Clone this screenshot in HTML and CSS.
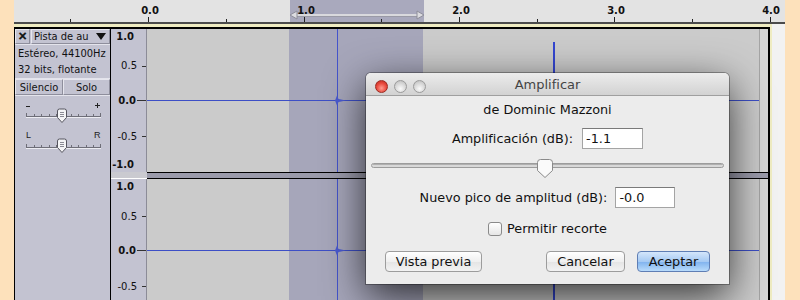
FILE: index.html
```html
<!DOCTYPE html>
<html lang="es">
<head>
  <meta charset="UTF-8" />
  <title>Amplificar</title>
  <link rel="stylesheet" href="styles.css">
</head>
<body>
  <div class="edge"></div>

  <div class="project">
    <div class="ruler">
      <svg width="771" height="22">
        <rect x="276" y="0" width="134" height="22" fill="#a9a9bd"/>
        <line x1="282" y1="15" x2="403" y2="15" stroke="#d9d9dd" stroke-width="2"/>
        <line x1="282" y1="16.5" x2="403" y2="16.5" stroke="#9a9aa6" stroke-width="1"/>
        <polygon points="276,15 283,11 283,19" fill="#dcdce0" stroke="#8e8e9a" stroke-width="1"/>
        <polygon points="410,15 403,11 403,19" fill="#dcdce0" stroke="#8e8e9a" stroke-width="1"/>
        <g stroke="#222" stroke-width="1">
          <line x1="56.5" y1="19" x2="56.5" y2="22"/>
          <line x1="134.5" y1="17" x2="134.5" y2="22"/>
          <line x1="212.5" y1="19" x2="212.5" y2="22"/>
          <line x1="290.5" y1="17" x2="290.5" y2="22"/>
          <line x1="367.5" y1="19" x2="367.5" y2="22"/>
          <line x1="445.5" y1="17" x2="445.5" y2="22"/>
          <line x1="523.5" y1="19" x2="523.5" y2="22"/>
          <line x1="600.5" y1="17" x2="600.5" y2="22"/>
          <line x1="678.5" y1="19" x2="678.5" y2="22"/>
          <line x1="756.5" y1="17" x2="756.5" y2="22"/>
        </g>
        <g class="ruler-label">
          <text x="136" y="14">0.0</text>
          <text x="292" y="14">1.0</text>
          <text x="447" y="14">2.0</text>
          <text x="602" y="14">3.0</text>
          <text x="757" y="14">4.0</text>
        </g>
      </svg>
    </div>

    <div class="workspace">
      <div class="focus">
        <div class="track">
          <div class="panel">
            <div class="panel-top">
              <span class="bevel close">&#x2715;</span>
              <span class="bevel name">Pista de au<i class="arrow"></i></span>
            </div>
            <div class="info">
              Estéreo, 44100Hz<br />
              32 bits, flotante
            </div>
            <div class="mute-row">
              <span class="bevel mute">Silencio</span>
              <span class="bevel solo">Solo</span>
            </div>
            <svg class="sliders" width="95" height="62">
              <line x1="11" y1="10.5" x2="15" y2="10.5" stroke="#222"/>
              <line x1="80" y1="9.5" x2="85" y2="9.5" stroke="#222"/>
              <line x1="82.5" y1="7" x2="82.5" y2="12" stroke="#222"/>
              <line x1="11" y1="20.5" x2="86" y2="20.5" stroke="#6e6e78"/>
              <line x1="11" y1="21.5" x2="86" y2="21.5" stroke="#ececf2"/>
              <g stroke="#6e6e78">
                <line x1="11.5" y1="17" x2="11.5" y2="20"/><line x1="19.5" y1="18" x2="19.5" y2="20"/>
                <line x1="26.5" y1="18" x2="26.5" y2="20"/><line x1="34.5" y1="18" x2="34.5" y2="20"/>
                <line x1="41.5" y1="18" x2="41.5" y2="20"/><line x1="56.5" y1="18" x2="56.5" y2="20"/>
                <line x1="63.5" y1="18" x2="63.5" y2="20"/><line x1="71.5" y1="18" x2="71.5" y2="20"/>
                <line x1="78.5" y1="18" x2="78.5" y2="20"/><line x1="85.5" y1="17" x2="85.5" y2="20"/>
              </g>
              <path d="M42.5 15 a2 2 0 0 1 2 -2 h5 a2 2 0 0 1 2 2 v6.5 l-4.5 5 l-4.5 -5 z" fill="#f4f4f6" stroke="#55555f"/>
              <g stroke="#8a8a94"><line x1="45" y1="16.5" x2="49" y2="16.5"/><line x1="45" y1="18.5" x2="49" y2="18.5"/><line x1="45" y1="20.5" x2="49" y2="20.5"/></g>

              <text class="pan-label" x="11" y="42">L</text>
              <text class="pan-label" x="79" y="42">R</text>
              <line x1="11" y1="51.5" x2="86" y2="51.5" stroke="#6e6e78"/>
              <line x1="11" y1="52.5" x2="86" y2="52.5" stroke="#ececf2"/>
              <g stroke="#6e6e78">
                <line x1="11.5" y1="48" x2="11.5" y2="51"/><line x1="19.5" y1="49" x2="19.5" y2="51"/>
                <line x1="26.5" y1="49" x2="26.5" y2="51"/><line x1="34.5" y1="49" x2="34.5" y2="51"/>
                <line x1="41.5" y1="49" x2="41.5" y2="51"/><line x1="56.5" y1="49" x2="56.5" y2="51"/>
                <line x1="63.5" y1="49" x2="63.5" y2="51"/><line x1="71.5" y1="49" x2="71.5" y2="51"/>
                <line x1="78.5" y1="49" x2="78.5" y2="51"/><line x1="85.5" y1="48" x2="85.5" y2="51"/>
              </g>
              <path d="M42.5 45 a2 2 0 0 1 2 -2 h5 a2 2 0 0 1 2 2 v6.5 l-4.5 5 l-4.5 -5 z" fill="#f4f4f6" stroke="#55555f"/>
              <g stroke="#8a8a94"><line x1="45" y1="46.5" x2="49" y2="46.5"/><line x1="45" y1="48.5" x2="49" y2="48.5"/><line x1="45" y1="50.5" x2="49" y2="50.5"/></g>
            </svg>
          </div>

          <div class="channels">
            <div class="channel">
              <div class="vruler">
                <svg width="35" height="143">
                  <text class="major" x="23" y="11">1.0</text>
                  <text x="26" y="40">0.5</text>
                  <text class="major" x="25" y="75">0.0</text>
                  <text x="26" y="111">-0.5</text>
                  <text class="major" x="23" y="139">-1.0</text>
                  <g stroke="#333"><line x1="31" y1="37.5" x2="35" y2="37.5"/><line x1="26" y1="71.5" x2="35" y2="71.5"/><line x1="31" y1="107.5" x2="35" y2="107.5"/></g>
                </svg>
              </div>
              <div class="wave">
                <svg width="612" height="143">
                  <rect x="142" y="0" width="134" height="143" fill="#a6a6ba"/>
                  <line x1="0" y1="71.5" x2="612" y2="71.5" stroke="#3d4fc6"/>
                  <line x1="190.5" y1="0" x2="190.5" y2="143" stroke="#4454cc"/>
                  <polygon points="188,71.5 190,66.5 191.5,70 199,71.5 191.5,73 190,76.5" fill="#4a5ad0"/>
                  <rect x="406" y="13" width="2" height="117" fill="#3446d0"/>
                </svg>
              </div>
              <div class="wave-end"></div>
            </div>

            <div class="divider">
              <div class="divider-ruler"></div>
              <div class="divider-wave"></div>
            </div>

            <div class="channel">
              <div class="vruler">
                <svg width="35" height="121">
                  <text class="major" x="23" y="11">1.0</text>
                  <text x="26" y="41">0.5</text>
                  <text class="major" x="25" y="75">0.0</text>
                  <text x="26" y="111">-0.5</text>
                  <g stroke="#333"><line x1="31" y1="37.5" x2="35" y2="37.5"/><line x1="26" y1="71.5" x2="35" y2="71.5"/><line x1="31" y1="107.5" x2="35" y2="107.5"/></g>
                </svg>
              </div>
              <div class="wave">
                <svg width="612" height="143">
                  <rect x="142" y="0" width="134" height="143" fill="#a6a6ba"/>
                  <line x1="0" y1="71.5" x2="612" y2="71.5" stroke="#3d4fc6"/>
                  <line x1="190.5" y1="0" x2="190.5" y2="143" stroke="#4454cc"/>
                  <polygon points="188,71.5 190,66.5 191.5,70 199,71.5 191.5,73 190,76.5" fill="#4a5ad0"/>
                  <rect x="406" y="13" width="2" height="117" fill="#3446d0"/>
                </svg>
              </div>
              <div class="wave-end"></div>
            </div>
          </div>
        </div>
      </div>
    </div>
  </div>

  <div class="dialog">
    <div class="titlebar">
      <div class="lights">
        <span class="light red"></span>
        <span class="light"></span>
        <span class="light"></span>
      </div>
      <div class="title">Amplificar</div>
      <div></div>
    </div>
    <div class="dialog-body">
      <div class="author">de Dominic Mazzoni</div>
      <div class="field-row">
        <label for="amp">Amplificación (dB):</label>
        <input id="amp" class="amp-input" type="text" value="-1.1" />
      </div>
      <svg class="amp-slider" width="353" height="20">
        <rect x="0.5" y="4.5" width="352" height="4" rx="2" fill="#d8d8d8" stroke="#9c9c9c"/>
        <line x1="2" y1="5.5" x2="351" y2="5.5" stroke="#b0b0b0"/>
        <path d="M166.5 3.5 a3 3 0 0 1 3 -3 h9 a3 3 0 0 1 3 3 v8 l-7.5 7 l-7.5 -7 z" fill="#fafafa" stroke="#8a8a8a"/>
      </svg>
      <div class="field-row">
        <label for="peak">Nuevo pico de amplitud (dB):</label>
        <input id="peak" class="peak-input" type="text" value="-0.0" />
      </div>
      <div class="check-row">
        <input id="clip" type="checkbox" />
        <label for="clip">Permitir recorte</label>
      </div>
      <div class="button-row">
        <button class="btn preview">Vista previa</button>
        <span class="spacer"></span>
        <button class="btn cancel">Cancelar</button>
        <button class="btn ok">Aceptar</button>
      </div>
    </div>
  </div>
</body>
</html>
```

FILE: styles.css
```css
body {
  margin: 0;
  width: 800px;
  height: 300px;
  overflow: hidden;
  display: flex;
  position: relative;
  background: #fde1bb;
  font-family: "DejaVu Sans", sans-serif;
  color: #111;
}
.edge {
  width: 14px;
}
.project {
  width: 771px;
}
.ruler {
  height: 22px;
  background: #e3e3e3;
  border-bottom: 2px solid #4b4b4b;
}
.ruler svg {
  display: block;
}
.ruler-label text {
  font-family: "DejaVu Sans", sans-serif;
  font-weight: bold;
  font-size: 10px;
  text-anchor: middle;
  fill: #111;
}
.workspace {
  height: 276px;
  background: #f2f2f2;
  padding-right: 13px;
}
.focus {
  border-top: 3px solid #efecc2;
  border-right: 2px solid #efecc2;
}
.track {
  display: flex;
  border-top: 2px solid #000;
  border-right: 2px solid #000;
  border-left: 1px solid #000;
  height: 272px;
  overflow: hidden;
}
.panel {
  width: 95px;
  flex: none;
  background: #c3c3d1;
  border-right: 1px solid #000;
  font-family: "DejaVu Sans Condensed", "Liberation Sans", sans-serif;
  font-size: 11px;
}
.panel-top {
  display: flex;
  gap: 1px;
  height: 15px;
  border-bottom: 1px solid #e4e4ec;
}
.bevel {
  box-sizing: border-box;
  display: flex;
  align-items: center;
  border: 1px solid #e6e6ee;
  border-right-color: #8e8e9c;
  border-bottom-color: #8e8e9c;
  line-height: 1;
}
.close {
  width: 15px;
  justify-content: center;
  font-family: "DejaVu Sans", sans-serif;
  font-weight: bold;
  font-size: 11px;
  -webkit-text-stroke: 0.6px #111;
}
.name {
  flex: 1;
  padding-left: 2px;
  white-space: nowrap;
}
.arrow {
  margin-left: auto;
  margin-right: 3px;
  width: 0;
  height: 0;
  border-left: 5px solid transparent;
  border-right: 5px solid transparent;
  border-top: 7px solid #111;
}
.info {
  padding: 1px 0 0 3px;
  line-height: 16px;
  height: 32px;
  white-space: nowrap;
  border-bottom: 1px solid #e4e4ec;
}
.mute-row {
  display: flex;
  height: 16px;
  border-bottom: 1px solid #e4e4ec;
}
.mute {
  width: 48px;
  justify-content: center;
}
.solo {
  flex: 1;
  justify-content: center;
}
.sliders {
  display: block;
}
.pan-label {
  font-family: "Liberation Sans", sans-serif;
  font-size: 9px;
  fill: #222;
}
.channels {
  width: 657px;
  flex: none;
}
.channel {
  display: flex;
  height: 143px;
}
.vruler {
  width: 35px;
  flex: none;
  background: #c3c3d1;
  border-right: 1px solid #8c8c98;
}
.vruler svg,
.wave svg {
  display: block;
}
.vruler text {
  font-family: "DejaVu Sans", sans-serif;
  font-size: 10px;
  text-anchor: end;
  fill: #111;
}
.vruler text.major {
  font-weight: bold;
}
.wave {
  width: 612px;
  flex: none;
  background: #cbcbcb;
}
.wave-end {
  width: 8px;
  flex: none;
  border-left: 1px solid #a4a4a4;
  background: #d6d6d6;
}
.divider {
  display: flex;
  height: 7px;
}
.divider-ruler {
  box-sizing: border-box;
  width: 36px;
  background: #cacad0;
  border-bottom: 1px solid #fff;
}
.divider-wave {
  flex: 1;
  box-sizing: border-box;
  background: #9b9bab;
  border-top: 1px solid #000;
  border-bottom: 1px solid #000;
}

.dialog {
  position: absolute;
  left: 366px;
  top: 73px;
  width: 363px;
  height: 211px;
  background: #ececec;
  border-radius: 5px 5px 0 0;
  box-shadow: 0 0 0 1px rgba(0, 0, 0, 0.3), 0 12px 40px rgba(0, 0, 0, 0.75);
  display: flex;
  flex-direction: column;
  font-size: 12.8px;
}
.titlebar {
  height: 22px;
  flex: none;
  display: grid;
  grid-template-columns: 1fr auto 1fr;
  background: linear-gradient(#ececec, #d2d2d2);
  border-bottom: 1px solid #9f9f9f;
  border-radius: 5px 5px 0 0;
}
.lights {
  display: flex;
  gap: 6px;
  padding: 7px 0 0 9px;
}
.light {
  box-sizing: border-box;
  width: 13px;
  height: 13px;
  border-radius: 50%;
  border: 1px solid #9b9b9b;
  background: radial-gradient(circle at 50% 70%, #fafafa, #d4d4d4 60%, #b8b8b8);
}
.light.red {
  border-color: #9c2b22;
  background: radial-gradient(circle at 50% 65%, #ff9c90, #e8483c 55%, #b42a20);
}
.title {
  font-size: 13px;
  color: #444;
  line-height: 23px;
}
.dialog-body {
  display: flex;
  flex-direction: column;
  align-items: center;
  padding-top: 6px;
}
.author {
  line-height: 16px;
}
.field-row {
  display: flex;
  align-items: center;
  gap: 9px;
  height: 21px;
  margin-top: 10px;
}
.field-row input {
  box-sizing: border-box;
  height: 21px;
  margin: 0;
  padding: 0 3px;
  border: 1px solid #a4a4a4;
  border-top-color: #7a7a7a;
  background: #fff;
  font-family: "DejaVu Sans", sans-serif;
  font-size: 12.8px;
  color: #111;
}
.amp-input {
  width: 61px;
}
.peak-input {
  width: 60px;
}
.amp-slider {
  display: block;
  align-self: flex-start;
  margin: 10px 0 0 5px;
}
.amp-slider + .field-row {
  margin-top: 8px;
  gap: 8px;
}
.check-row {
  display: flex;
  align-items: center;
  gap: 5px;
  height: 15px;
  margin-top: 13px;
}
.check-row input {
  appearance: none;
  box-sizing: border-box;
  width: 14px;
  height: 14px;
  margin: 0;
  border: 1px solid #8a8a8a;
  border-radius: 3px;
  background: linear-gradient(#ffffff, #e6e6e6);
}
.button-row {
  display: flex;
  align-self: stretch;
  gap: 13px;
  margin-top: 15px;
  padding: 0 19px;
}
.spacer {
  flex: 1;
}
.btn {
  box-sizing: border-box;
  height: 21px;
  margin: 0;
  padding: 0;
  border: 1px solid #9c9c9c;
  border-radius: 4px;
  background: linear-gradient(#ffffff, #f0f0f0 50%, #e4e4e4 51%, #f2f2f2);
  font-family: "DejaVu Sans", sans-serif;
  font-size: 12.8px;
  color: #111;
}
.preview {
  width: 97px;
}
.cancel {
  width: 79px;
}
.ok {
  width: 73px;
  border-color: #5f7eb4;
  background: linear-gradient(#d4e6fb, #a6caf3 50%, #7fb2ee 51%, #b8dbfb);
}
.button-row .ok {
  margin-left: -1px;
}
```
